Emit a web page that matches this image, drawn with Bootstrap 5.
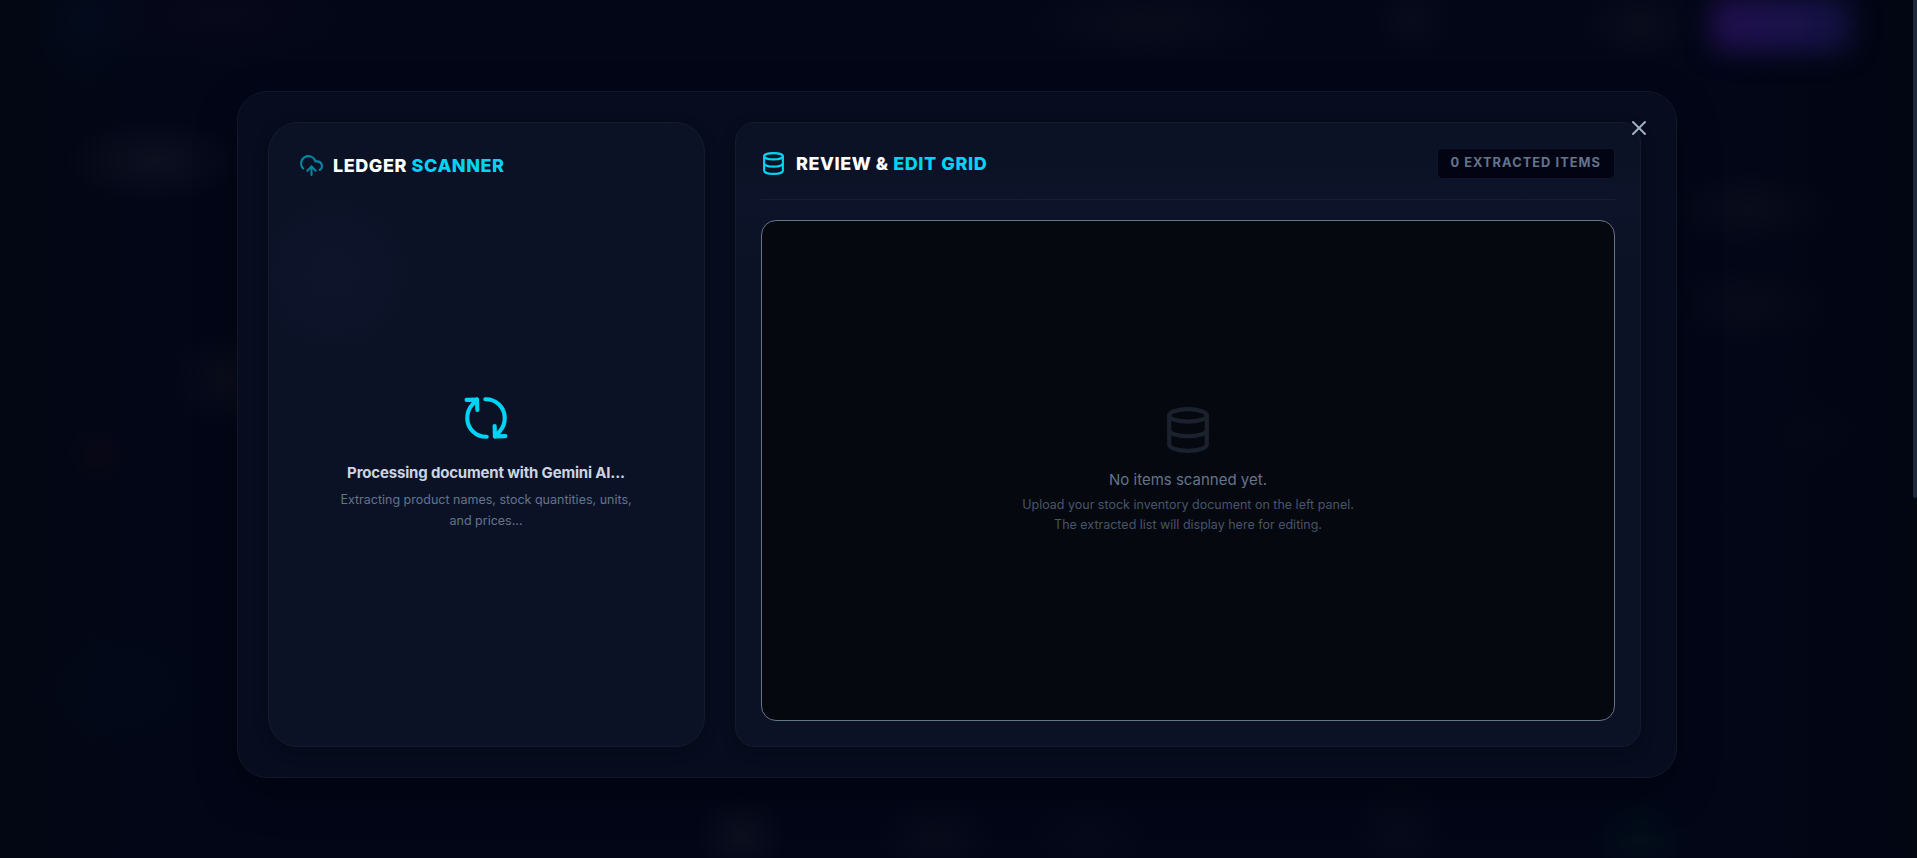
<!DOCTYPE html>
<html lang="en">
<head>
<meta charset="utf-8">
<meta name="viewport" content="width=device-width, initial-scale=1">
<title>Ledger Scanner</title>
<link href="https://cdn.jsdelivr.net/npm/bootstrap@5.3.0/dist/css/bootstrap.min.css" rel="stylesheet">
<style>
  :root { --cyan: #00d4f5; --slate: #64748b; }
  body {
    font-family: Inter, "Liberation Sans", sans-serif;
    height: 858px;
    background-color: #020617;
    /* dimmed glow of the dashboard behind the dialog */
    background-image:
      radial-gradient(60px 75px at 88px 20px, rgba(4,16,36,.4), transparent),
      radial-gradient(150px 60px at 220px 15px, rgba(14,11,30,.45), transparent),
      radial-gradient(90px 42px at 155px 161px, rgba(19,21,36,.65), transparent),
      radial-gradient(60px 50px at 228px 380px, rgba(19,21,32,.5), transparent),
      radial-gradient(32px 32px at 100px 454px, rgba(26,9,20,.3), transparent),
      radial-gradient(100px 70px at 130px 690px, rgba(4,12,30,.4), transparent),
      radial-gradient(130px 40px at 1150px 23px, rgba(14,17,30,.55), transparent),
      radial-gradient(40px 40px at 1414px 20px, rgba(17,19,34,.4), transparent),
      radial-gradient(60px 38px at 1640px 25px, rgba(14,17,30,.6), transparent),
      radial-gradient(85px 40px at 1750px 209px, rgba(14,17,30,.6), transparent),
      radial-gradient(85px 42px at 1750px 305px, rgba(12,15,28,.6), transparent),
      radial-gradient(60px 40px at 1810px 432px, rgba(8,11,26,.3), transparent),
      radial-gradient(46px 40px at 741px 835px, rgba(19,21,34,.6), transparent),
      radial-gradient(60px 40px at 936px 836px, rgba(14,17,30,.5), transparent),
      radial-gradient(65px 40px at 1088px 834px, rgba(8,12,28,.5), transparent),
      radial-gradient(50px 50px at 1399px 830px, rgba(14,17,30,.4), transparent),
      radial-gradient(52px 42px at 1640px 838px, rgba(2,22,28,.5), transparent),
      linear-gradient(90deg, #030713 0, #020617 170px, #020617 1700px, #020512 100%);
  }
  .cta-glow {
    left: 1710px; top: -4px; width: 142px; height: 56px; border-radius: 16px;
    background: linear-gradient(90deg, #200e4c, #19124a 60%, #10103c);
    filter: blur(13px);
  }
  .page-thumb { right: 0; top: 0; width: 4px; height: 498px; background: #1e293b; border-radius: 0 0 2px 2px; }
  .page-track { right: 0; top: 0; width: 4px; height: 858px; background: #03070f; }
  .stage { padding: 91px 0 0 237px; }
  .scan-dialog {
    width: 1440px; height: 687px; padding: 30px 35px 30px 30px; gap: 30px;
    border: 1px solid #131828; border-radius: 30px;
    background: #070c1e;
    box-shadow: 0 15px 40px rgba(0,0,0,.35);
  }
  .pane { border: 1px solid #161c2d; background: #0c1225; box-shadow: 0 4px 16px rgba(0,0,0,.15); }
  .pane-scan { width: 437px; padding: 30px; border-radius: 30px;
    background: radial-gradient(circle at 64px 152px, #0e1429 0, #0d1328 52px, #0c1225 92px); }
  .pane-grid { padding: 25px; border-radius: 20px;
    background: linear-gradient(#0c1225 0, #0c1225 30px, #0d1328 70px, #0c1225 200px); }
  .pane-title { font-size: 18px; font-weight: 800; line-height: 24px; gap: 10px; color: #fff; letter-spacing: .57px; }
  .accent { color: var(--cyan); }
  .grid-head { height: 52px; padding-bottom: 20px; margin-bottom: 20px; border-bottom: 1px solid #162033; }
  .count-pill {
    height: 31px; padding: 0 13px 1px 12px; border: 1px solid #0f172a; border-radius: 5px; background: #020414;
    color: var(--slate); font-size: 12.8px; font-weight: 700; letter-spacing: 1.06px;
  }
  .empty-grid { border: 1px solid var(--slate); border-radius: 15px; background: #05080f; }
  .lucide { fill: none; stroke: currentColor; stroke-width: 2; stroke-linecap: round; stroke-linejoin: round; flex: none; }
  .busy { padding: 215px 1px 0 0; }
  .busy-title { font-size: 15px; font-weight: 700; line-height: 24px; letter-spacing: -.17px; color: #cbd5e1; margin-top: 18px; }
  .busy-note { font-size: 12.5px; line-height: 21px; color: var(--slate); margin-top: 4px; }
  .empty-title { font-size: 15px; line-height: 24px; color: var(--slate); margin-top: 13px; }
  .empty-note { font-size: 12.5px; line-height: 20px; color: #475569; margin-top: 3px; }
  .empty-body { padding-top: 184px; }
  .close-x { right: 25px; top: 24px; width: 24px; height: 24px; color: #a3b1c8; }
</style>
</head>
<body class="m-0 overflow-hidden position-relative">
<div class="cta-glow position-absolute"></div>
<div class="page-track position-absolute"></div>
<div class="page-thumb position-absolute"></div>
<main class="stage">
  <div class="scan-dialog d-flex position-relative">
    <section class="pane pane-scan d-flex flex-column flex-shrink-0">
      <h2 class="pane-title d-flex align-items-center m-0" style="gap:9px">
        <svg class="lucide accent" style="opacity:.6" width="25" height="25" viewBox="0 0 24 24"><path d="M12 13v8"/><path d="M4 14.899A7 7 0 1 1 15.71 8h1.79a4.5 4.5 0 0 1 2.5 8.242"/><path d="m8 17 4-4 4 4"/></svg>
        <span>LEDGER <span class="accent">SCANNER</span></span>
      </h2>
      <div class="busy flex-grow-1 d-flex flex-column align-items-center text-center">
        <svg class="lucide accent" width="50" height="50" viewBox="0 0 24 24"><g transform="rotate(-92 12 12)"><path d="M3 12a9 9 0 0 1 9-9 9.75 9.75 0 0 1 6.74 2.74L21 8"/><path d="M21 3v5h-5"/><path d="M21 12a9 9 0 0 1-9 9 9.75 9.75 0 0 1-6.74-2.74L3 16"/><path d="M8 16H3v5"/></g></svg>
        <div class="busy-title">Processing document with Gemini AI...</div>
        <div class="busy-note">Extracting product names, stock quantities, units,<br>and prices...</div>
      </div>
    </section>
    <section class="pane pane-grid d-flex flex-column flex-grow-1">
      <header class="grid-head d-flex align-items-center justify-content-between">
        <h2 class="pane-title d-flex align-items-center m-0">
          <svg class="lucide accent" width="25" height="25" viewBox="0 0 24 24"><ellipse cx="12" cy="5" rx="9" ry="3"/><path d="M3 5V19A9 3 0 0 0 21 19V5"/><path d="M3 12A9 3 0 0 0 21 12"/></svg>
          <span>REVIEW &amp; <span class="accent">EDIT GRID</span></span>
        </h2>
        <span class="count-pill d-flex align-items-center">0 EXTRACTED ITEMS</span>
      </header>
      <div class="empty-grid empty-body flex-grow-1 d-flex flex-column align-items-center text-center">
        <svg class="lucide" style="color:#1b222d" width="50" height="50" viewBox="0 0 24 24"><ellipse cx="12" cy="5" rx="9" ry="3"/><path d="M3 5V19A9 3 0 0 0 21 19V5"/><path d="M3 12A9 3 0 0 0 21 12"/></svg>
        <div class="empty-title">No items scanned yet.</div>
        <div class="empty-note">Upload your stock inventory document on the left panel.<br>The extracted list will display here for editing.</div>
      </div>
    </section>
    <svg class="lucide close-x position-absolute" viewBox="0 0 24 24"><path d="M18 6 6 18"/><path d="m6 6 12 12"/></svg>
  </div>
</main>
<script src="https://cdn.jsdelivr.net/npm/bootstrap@5.3.0/dist/js/bootstrap.bundle.min.js"></script>
</body>
</html>
